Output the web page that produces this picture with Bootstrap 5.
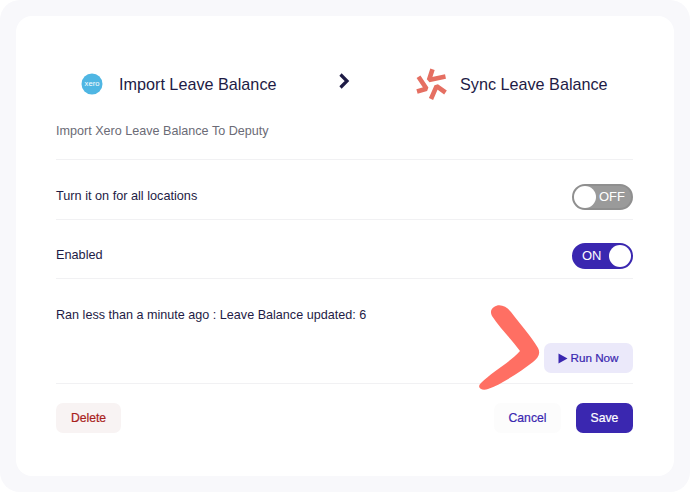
<!DOCTYPE html>
<html lang="en">
<head>
<meta charset="utf-8">
<title>Import Leave Balance</title>
<link rel="stylesheet" href="https://cdn.jsdelivr.net/npm/bootstrap@5.3.0/dist/css/bootstrap.min.css">
<style>
html,body{height:100%;background:#fff;}
body{font-family:"Liberation Sans",Arial,sans-serif;color:#1e1b45;overflow:hidden;}
.frame-box{width:690px;height:492px;background:#f8f8fb;border-radius:20px;padding:16px;}
.sheet{position:relative;height:460px;background:#fff;border-radius:16px;padding:0 41px 0 40px;}
.flow-head{height:108px;padding-top:28px;}
.flow-left{width:232px;padding-left:25px;}
.flow-title{font-size:16.2px;line-height:24px;color:#1e1b45;}
.chev{width:14px;margin-left:49px;margin-top:-6px;}
.flow-right{margin-left:65px;gap:12px;}
.sub-text{font-size:12.6px;line-height:18px;color:#6b6b76;height:37px;margin-top:-2px;}
.line-row{font-size:12.7px;color:#1e1b45;border-top:1px solid #f1f1f3;}
.row-a{height:60px;padding-top:14px;}
.row-b{height:59px;padding-top:13px;}
.row-c{height:105px;border-top:1px solid #f1f1f3;}
.row-d{border-top:1px solid #f1f1f3;padding-top:19px;}
.run-msg{font-size:12.6px;line-height:18px;padding-top:27px;height:64px;}
.tog{width:61px;height:26px;border-radius:13px;font-size:13px;color:#fff;border:2px solid;display:flex;align-items:center;}
.tog-off{background:#9a9a9a;border-color:#8f8f8f;justify-content:flex-end;padding-right:6px;position:relative;}
.tog-on{background:#3a27b0;border-color:#3a27b0;padding-left:8px;position:relative;}
.knob{position:absolute;top:0;width:22px;height:22px;border-radius:50%;background:#fff;}
.tog-off .knob{left:0;}
.tog-on .knob{right:0;}
.act{font-size:12.2px;font-weight:400;height:30px;border-radius:7px;border:0;padding:0;display:inline-flex;align-items:center;justify-content:center;-webkit-text-stroke:.2px currentColor;}
.act-run{width:89px;background:#ebe9fa;color:#3a27b0;gap:2px;font-size:11.7px;}
.act-del{width:65px;background:#f8f3f3;color:#a8211c;}
.act-cancel{width:67px;background:#fcfcfc;color:#3a27b0;}
.act-save{width:57px;background:#3a27b0;color:#fff;}
.act-pair{gap:15px;}
.pointer-mark{position:absolute;left:462px;top:288px;width:72px;height:90px;}
</style>
</head>
<body>
<div class="frame-box">
  <div class="sheet">
    <div class="flow-head d-flex align-items-center">
      <div class="flow-left d-flex align-items-center gap-3">
        <svg width="22" height="22" viewBox="0 0 22 22" aria-hidden="true">
          <circle cx="11" cy="11" r="10.5" fill="#4fb6e3"/>
          <text x="11" y="13.3" font-size="7.6" text-anchor="middle" fill="#fff" font-family="Liberation Sans">xero</text>
        </svg>
        <span class="flow-title">Import Leave Balance</span>
      </div>
      <svg class="chev" width="11" height="16" viewBox="0 0 11 16" aria-hidden="true">
        <path d="M2 1.5 L8.5 8 L2 14.5" fill="none" stroke="#1e1b45" stroke-width="3.2"/>
      </svg>
      <div class="flow-right d-flex align-items-center">
        <svg width="32" height="32" viewBox="0 0 32 32" aria-hidden="true">
          <g fill="none" stroke="#e56f62" stroke-width="4.6" stroke-linejoin="bevel">
            <path d="M16.5 1.2 L13 12 L29.5 8.6"/>
            <path d="M2.5 8.8 L10.5 20.8 L1 23.5"/>
            <path d="M15 31 L20.6 18.2 L29.5 24.5"/>
          </g>
        </svg>
        <span class="flow-title">Sync Leave Balance</span>
      </div>
    </div>
    <div class="sub-text">Import Xero Leave Balance To Deputy</div>
    <div class="line-row row-a d-flex justify-content-between align-items-center">
      <span>Turn it on for all locations</span>
      <div class="tog tog-off"><span class="knob"></span>OFF</div>
    </div>
    <div class="line-row row-b d-flex justify-content-between align-items-center">
      <span>Enabled</span>
      <div class="tog tog-on">ON<span class="knob"></span></div>
    </div>
    <div class="row-c">
      <div class="run-msg">Ran less than a minute ago : Leave Balance updated: 6</div>
      <div class="d-flex justify-content-end">
        <button type="button" class="btn act act-run">
          <svg width="10" height="11" viewBox="0 0 10 11" aria-hidden="true"><path d="M0.5 0.5 L9.5 5.5 L0.5 10.5 Z" fill="#3a27b0"/></svg>
          Run Now
        </button>
      </div>
    </div>
    <div class="row-d d-flex align-items-center">
      <button type="button" class="btn act act-del">Delete</button>
      <div class="ms-auto d-flex act-pair">
        <button type="button" class="btn act act-cancel">Cancel</button>
        <button type="button" class="btn act act-save">Save</button>
      </div>
    </div>
    <svg class="pointer-mark" viewBox="0 0 72 90" aria-hidden="true">
      <path d="M16 3 C22 -1 29 3 33 8 C42 20 53 32 60 44 C63 50 60 54 55 58 C42 68 24 80 10 85 C4 87 -2 84 3 79 C14 68 30 60 42 47 C34 36 22 24 14 12 C12 8 13 5 16 3 Z" fill="#ff6f63"/>
    </svg>
  </div>
</div>
<script src="https://cdn.jsdelivr.net/npm/bootstrap@5.3.0/dist/js/bootstrap.bundle.min.js"></script>
</body>
</html>
